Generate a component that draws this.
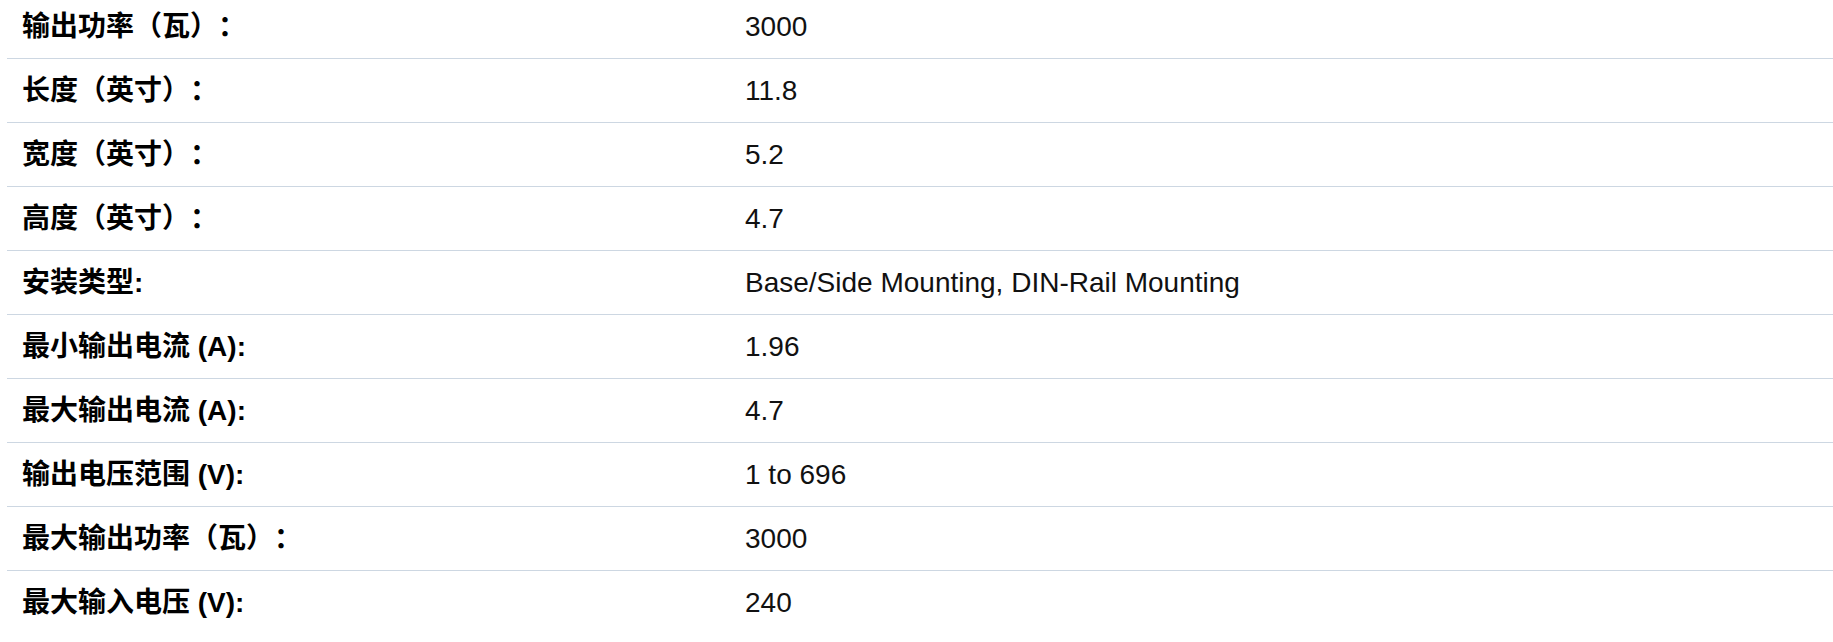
const specs = [
    ["输出功率（瓦）：", "3000"],
    ["长度（英寸）：", "11.8"],
    ["宽度（英寸）：", "5.2"],
    ["高度（英寸）：", "4.7"],
    ["安装类型:", "Base/Side Mounting, DIN-Rail Mounting"],
    ["最小输出电流 (A):", "1.96"],
    ["最大输出电流 (A):", "4.7"],
    ["输出电压范围 (V):", "1 to 696"],
    ["最大输出功率（瓦）：", "3000"],
    ["最大输入电压 (V):", "240"],
];

function App ()
{
    return (
        <div className = "w-full h-[642px] overflow-hidden bg-white font-['Liberation_Sans','Noto_Sans_CJK_SC',sans-serif] text-[28px] text-[#111] [text-spacing-trim:space-all]">
            {/* Spec table */}
            <div className = "ml-[7px] -mt-[5px] flex flex-col">
                {specs.map(([label, value], i) => (
                    <div
                        key = {i}
                        className = {`grid grid-cols-[738px_1fr] items-center h-[64px] ${i < specs.length - 1 ? "border-b border-b-[#cdd7e2]" : ""}`}
                    >
                        <div className = "pl-[15px] font-bold text-black">{label}</div>
                        <div>{value}</div>
                    </div>
                ))}
            </div>
        </div>
    );
}

export default App;
